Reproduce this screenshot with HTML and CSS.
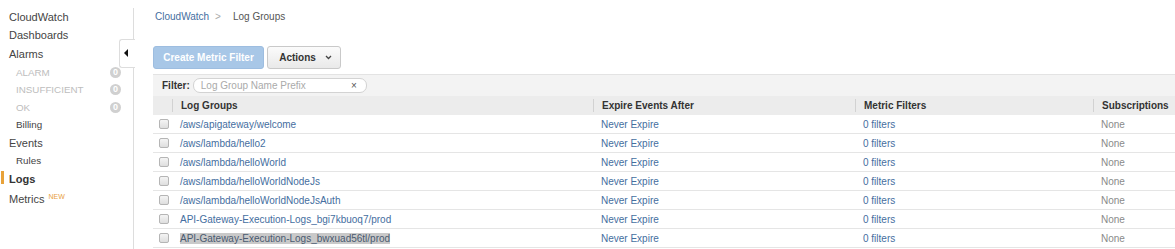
FILE: index.html
```html
<!DOCTYPE html>
<html lang="en">
<head>
    <meta charset="UTF-8">
    <meta name="viewport" content="width=device-width, initial-scale=1.0">
    <title>CloudWatch - Log Groups</title>
    <link rel="stylesheet" href="styles.css">
</head>
<body>

    <!-- Side navigation -->
    <div class="sidebar">
        <div class="nav-item first">CloudWatch</div>
        <div class="nav-item">Dashboards</div>
        <div class="nav-item">Alarms</div>
        <div class="nav-sub muted">ALARM <span class="badge">0</span></div>
        <div class="nav-sub muted">INSUFFICIENT <span class="badge">0</span></div>
        <div class="nav-sub muted">OK <span class="badge">0</span></div>
        <div class="nav-sub">Billing</div>
        <div class="nav-item">Events</div>
        <div class="nav-sub">Rules</div>
        <div class="nav-item active">Logs</div>
        <div class="nav-item">Metrics <sup class="new">NEW</sup></div>

        <div class="collapse-tab"><span class="arrow-left"></span></div>
    </div>

    <div class="main">
        <!-- Breadcrumb -->
        <div class="breadcrumb">
            <a href="#">CloudWatch</a><span class="crumb-sep">&gt;</span><span>Log Groups</span>
        </div>

        <!-- Toolbar -->
        <div class="toolbar">
            <button class="btn btn-primary">Create Metric Filter</button>
            <button class="btn btn-default">Actions
                <svg class="chevron" width="7" height="5" viewBox="0 0 7 5"><path d="M1 1 L3.5 3.5 L6 1" fill="none" stroke="#444" stroke-width="1.3"/></svg>
            </button>
        </div>

        <!-- Filter -->
        <div class="filter-bar">
            <span class="filter-label">Filter:</span>
            <div class="filter-input">
                <span class="placeholder">Log Group Name Prefix</span>
                <span class="clear">&times;</span>
            </div>
        </div>

        <table class="grid">
            <colgroup>
                <col style="width:19px">
                <col style="width:421px">
                <col style="width:262px">
                <col style="width:238px">
                <col>
            </colgroup>
            <thead>
                <tr>
                    <th></th>
                    <th><div class="th-inner">Log Groups</div></th>
                    <th><div class="th-inner">Expire Events After</div></th>
                    <th><div class="th-inner">Metric Filters</div></th>
                    <th><div class="th-inner">Subscriptions</div></th>
                </tr>
            </thead>
            <tbody>
                <tr>
                    <td class="check"><span class="box"></span></td>
                    <td><a href="#">/aws/apigateway/welcome</a></td>
                    <td><a href="#">Never Expire</a></td>
                    <td><a href="#">0 filters</a></td>
                    <td class="none">None</td>
                </tr>
                <tr>
                    <td class="check"><span class="box"></span></td>
                    <td><a href="#">/aws/lambda/hello2</a></td>
                    <td><a href="#">Never Expire</a></td>
                    <td><a href="#">0 filters</a></td>
                    <td class="none">None</td>
                </tr>
                <tr>
                    <td class="check"><span class="box"></span></td>
                    <td><a href="#">/aws/lambda/helloWorld</a></td>
                    <td><a href="#">Never Expire</a></td>
                    <td><a href="#">0 filters</a></td>
                    <td class="none">None</td>
                </tr>
                <tr>
                    <td class="check"><span class="box"></span></td>
                    <td><a href="#">/aws/lambda/helloWorldNodeJs</a></td>
                    <td><a href="#">Never Expire</a></td>
                    <td><a href="#">0 filters</a></td>
                    <td class="none">None</td>
                </tr>
                <tr>
                    <td class="check"><span class="box"></span></td>
                    <td><a href="#">/aws/lambda/helloWorldNodeJsAuth</a></td>
                    <td><a href="#">Never Expire</a></td>
                    <td><a href="#">0 filters</a></td>
                    <td class="none">None</td>
                </tr>
                <tr>
                    <td class="check"><span class="box"></span></td>
                    <td><a href="#">API-Gateway-Execution-Logs_bgi7kbuoq7/prod</a></td>
                    <td><a href="#">Never Expire</a></td>
                    <td><a href="#">0 filters</a></td>
                    <td class="none">None</td>
                </tr>
                <tr>
                    <td class="check"><span class="box"></span></td>
                    <td><a href="#" class="selected">API-Gateway-Execution-Logs_bwxuad56tl/prod</a></td>
                    <td><a href="#">Never Expire</a></td>
                    <td><a href="#">0 filters</a></td>
                    <td class="none">None</td>
                </tr>
            </tbody>
        </table>
    </div>

</body>
</html>
```

FILE: styles.css
```css
body, html {
    margin: 0;
    padding: 0;
    font-family: "Liberation Sans", Arial, sans-serif;
    background-color: #ffffff;
    color: #444;
}

body {
    display: flex;
    align-items: flex-start;
}

a {
    color: #456ea0;
    text-decoration: none;
}

/* Sidebar */
.sidebar {
    position: relative;
    width: 124px;
    padding-left: 9px;
    margin-top: 8px;
    min-height: 241px;
    border-right: 1px solid #dddddd;
    font-size: 11px;
    flex-shrink: 0;
}

.nav-item {
    line-height: 18.6px;
    color: #444;
    position: relative;
}

.nav-item.first {
    line-height: 18.4px;
}

.nav-sub {
    position: relative;
    line-height: 17.5px;
    padding-left: 7px;
    font-size: 9.8px;
    color: #444;
}

.nav-sub.muted {
    color: #bdbdbd;
}

.badge {
    position: absolute;
    left: 101px;
    top: 3px;
    width: 11px;
    height: 11px;
    border-radius: 50%;
    background-color: #d0d0d0;
    color: #fff;
    font-size: 9px;
    line-height: 11px;
    text-align: center;
    font-weight: bold;
}

.nav-item.active {
    font-weight: bold;
    color: #333;
}

.nav-item.active::before {
    content: "";
    position: absolute;
    left: -8px;
    top: 1px;
    width: 3px;
    height: 13px;
    background-color: #e8a23a;
}

.new {
    font-size: 7px;
    color: #e8a040;
    vertical-align: 4px;
    margin-left: 1px;
}

.collapse-tab {
    position: absolute;
    left: 119px;
    top: 31px;
    width: 15px;
    height: 27px;
    border: 1px solid #dddddd;
    border-right: none;
    border-radius: 3px 0 0 3px;
    background-color: #fff;
}

.arrow-left {
    position: absolute;
    left: 4px;
    top: 9px;
    width: 0;
    height: 0;
    border-top: 4px solid transparent;
    border-bottom: 4px solid transparent;
    border-right: 4px solid #111;
}

/* Main area */
.main {
    flex: 1;
    padding-left: 19px;
    padding-top: 10px;
    min-width: 0;
}

.breadcrumb {
    font-size: 10px;
    line-height: 14px;
    color: #555;
    padding-left: 2px;
}

.crumb-sep {
    color: #aaa;
    margin: 0 12px 0 6px;
}

.toolbar {
    display: flex;
    gap: 3px;
    margin-top: 22px;
}

.btn {
    font-family: "Liberation Sans", Arial, sans-serif;
    font-size: 10px;
    font-weight: bold;
    height: 23px;
    border-radius: 3px;
    padding: 0;
    display: flex;
    align-items: center;
    justify-content: center;
}

.btn-primary {
    width: 111px;
    color: #ffffff;
    background-color: #a8c7e7;
    border: 1px solid #9dbde0;
}

.btn-default {
    width: 74px;
    color: #333;
    background: linear-gradient(to bottom, #fbfbfb, #e9e9e9);
    border: 1px solid #c9c9c9;
    gap: 9px;
    padding-left: 3px;
}

.filter-bar {
    margin-top: 5px;
    height: 21px;
    background-color: #f3f3f3;
    border-top: 1px solid #e3e3e3;
    display: flex;
    align-items: center;
    padding-left: 9px;
}

.filter-label {
    font-size: 10px;
    font-weight: bold;
    color: #333;
    margin-right: 3px;
}

.filter-input {
    width: 174px;
    height: 15px;
    border: 1px solid #d3d3d3;
    border-radius: 7px;
    background-color: #fff;
    display: flex;
    align-items: center;
    justify-content: space-between;
    padding: 0 9px 0 7px;
    box-sizing: border-box;
}

.placeholder {
    font-size: 10px;
    color: #aaaaaa;
}

.clear {
    font-size: 10px;
    color: #555;
}

/* Table */
.grid {
    width: 100%;
    border-collapse: collapse;
    table-layout: fixed;
    font-size: 10px;
}

.grid th {
    background-color: #ececec;
    height: 19px;
    padding: 0;
    text-align: left;
    font-weight: bold;
    color: #333;
    white-space: nowrap;
}

.th-inner {
    border-left: 1px solid #d2d2d2;
    padding-left: 8px;
    line-height: 13px;
}

.grid td {
    height: 18px;
    padding: 0 0 0 8px;
    border-bottom: 1px solid #e5e5e5;
    white-space: nowrap;
    overflow: hidden;
}

.grid td.check {
    padding: 0 0 0 6px;
}

.box {
    display: block;
    width: 8px;
    height: 8px;
    border: 1px solid #b5b5b5;
    border-radius: 2px;
    background: linear-gradient(to bottom, #f4f4f4, #dedede);
}

.none {
    color: #8a8a8a;
}

.selected {
    background-color: #c9c9c9;
    color: #4a5a70;
}
```
